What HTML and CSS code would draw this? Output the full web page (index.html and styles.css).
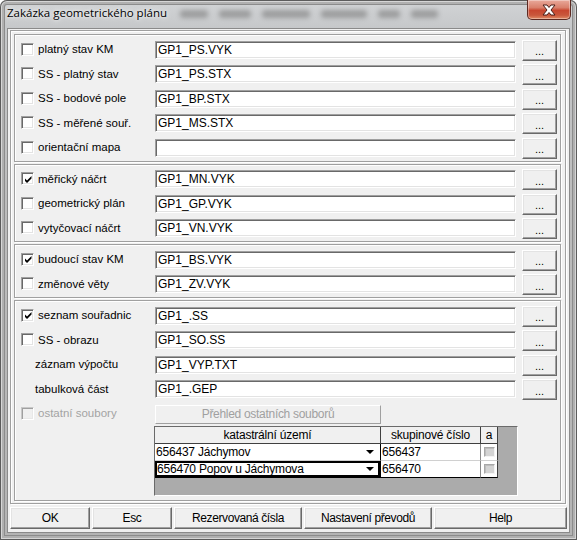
FILE: index.html
```html
<!DOCTYPE html>
<html lang="cs">
<head>
<meta charset="utf-8">
<title>Zakázka geometrického plánu</title>
<link rel="stylesheet" href="styles.css">
</head>
<body>
<div class="window">
  <div class="titlebar">
    <span class="title">Zakázka geometrického plánu</span>
    <div class="glass">
      <i class="sm w28"></i><i class="sm w32"></i><i class="sm w48"></i><i class="sm w46"></i><i class="sm w22"></i><i class="sm w27"></i>
    </div>
    <div class="close">
      <svg width="16" height="12" viewBox="0 0 16 12"><path d="M2 1 L6 1 L8 3.5 L10 1 L14 1 L10 6 L14 11 L10 11 L8 8.5 L6 11 L2 11 L6 6 Z" fill="#fff" stroke="#4a1f18" stroke-width="1" stroke-linejoin="round"/></svg>
    </div>
  </div>
  <div class="client">
    <div class="frame">
      <div class="group">
        <div class="row"><div class="lbl"><span class="cb"></span>platný stav KM</div><div class="edit">GP1_PS.VYK</div><div class="dots">...</div></div>
        <div class="row"><div class="lbl"><span class="cb"></span>SS - platný stav</div><div class="edit">GP1_PS.STX</div><div class="dots">...</div></div>
        <div class="row"><div class="lbl"><span class="cb"></span>SS - bodové pole</div><div class="edit">GP1_BP.STX</div><div class="dots">...</div></div>
        <div class="row"><div class="lbl"><span class="cb"></span>SS - měřené souř.</div><div class="edit">GP1_MS.STX</div><div class="dots">...</div></div>
        <div class="row"><div class="lbl"><span class="cb"></span>orientační mapa</div><div class="edit"></div><div class="dots">...</div></div>
      </div>
      <div class="group">
        <div class="row"><div class="lbl"><span class="cb checked"><svg width="9" height="9" viewBox="0 0 9 9"><path d="M1 3.5 L3 5.5 L7.5 1 L7.5 3.5 L3 8 L1 6 Z" fill="#000"/></svg></span>měřický náčrt</div><div class="edit">GP1_MN.VYK</div><div class="dots">...</div></div>
        <div class="row"><div class="lbl"><span class="cb"></span>geometrický plán</div><div class="edit">GP1_GP.VYK</div><div class="dots">...</div></div>
        <div class="row"><div class="lbl"><span class="cb"></span>vytyčovací náčrt</div><div class="edit">GP1_VN.VYK</div><div class="dots">...</div></div>
      </div>
      <div class="group">
        <div class="row"><div class="lbl"><span class="cb checked"><svg width="9" height="9" viewBox="0 0 9 9"><path d="M1 3.5 L3 5.5 L7.5 1 L7.5 3.5 L3 8 L1 6 Z" fill="#000"/></svg></span>budoucí stav KM</div><div class="edit">GP1_BS.VYK</div><div class="dots">...</div></div>
        <div class="row"><div class="lbl"><span class="cb"></span>změnové věty</div><div class="edit">GP1_ZV.VYK</div><div class="dots">...</div></div>
      </div>
      <div class="group last">
        <div class="row"><div class="lbl"><span class="cb checked"><svg width="9" height="9" viewBox="0 0 9 9"><path d="M1 3.5 L3 5.5 L7.5 1 L7.5 3.5 L3 8 L1 6 Z" fill="#000"/></svg></span>seznam souřadnic</div><div class="edit">GP1_.SS</div><div class="dots">...</div></div>
        <div class="row"><div class="lbl"><span class="cb"></span>SS - obrazu</div><div class="edit">GP1_SO.SS</div><div class="dots">...</div></div>
        <div class="row"><div class="lbl plain">záznam výpočtu</div><div class="edit">GP1_VYP.TXT</div><div class="dots">...</div></div>
        <div class="row"><div class="lbl plain">tabulková část</div><div class="edit">GP1_.GEP</div><div class="dots">...</div></div>
        <div class="row"><div class="lbl disabled"><span class="cb off"></span>ostatní soubory</div><div class="pbtn">Přehled ostatních souborů</div></div>
        <div class="table">
          <div class="grid">
            <div class="th">katastrální území</div>
            <div class="th">skupinové číslo</div>
            <div class="th">a</div>
            <div class="td combo">656437 Jáchymov<span class="arrow"></span></div>
            <div class="td num">656437</div>
            <div class="td chk"><span class="mini"></span></div>
            <div class="td combo focus lastrow">656470 Popov u Jáchymova<span class="arrow"></span></div>
            <div class="td num lastrow">656470</div>
            <div class="td chk lastrow"><span class="mini"></span></div>
          </div>
        </div>
      </div>
    </div>
    <div class="buttons">
      <div class="btn b-ok">OK</div>
      <div class="btn b-esc">Esc</div>
      <div class="btn b-rez">Rezervovaná čísla</div>
      <div class="btn b-nas">Nastavení převodů</div>
      <div class="btn b-help">Help</div>
    </div>
  </div>
</div>
</body>
</html>
```
FILE: styles.css
```css
* { box-sizing: border-box; }
html, body { margin: 0; padding: 0; }
body {
  width: 577px;
  height: 540px;
  overflow: hidden;
  background: #ffffff;
  font-family: "Liberation Sans", Arial, sans-serif;
  font-size: 11px;
  color: #000;
}

.window {
  width: 577px;
  height: 540px;
  display: flex;
  flex-direction: column;
  padding: 0 8px 8px;
  border-radius: 7px 7px 0 0;
  background: linear-gradient(180deg, #d2d4d6 0, #c6c8ca 28px, #bdbdbd 200px, #b4b4b4 100%);
  box-shadow: inset 0 0 0 1px #5c5c5c, inset 0 0 0 2px #d6d6d6, inset 0 0 0 4px #b0b0b0, inset 0 0 0 5px #8c8c8c;
}

/* title bar */
.titlebar {
  height: 29px;
  flex: none;
  display: flex;
  align-items: flex-start;
}
.title {
  margin: 5px 0 0 -1px;
  font-family: "Open Sans", "Noto Sans", sans-serif;
  font-size: 11.5px;
  line-height: 16px;
  color: #000;
  text-shadow: 0 0 6px #f4f4f4, 0 0 3px #f4f4f4;
  white-space: nowrap;
}
.glass {
  display: flex;
  gap: 11px;
  margin: 10px 0 0 13px;
  filter: blur(2.5px);
  opacity: .5;
}
.sm { display: block; height: 8px; background: #6d6d6d; border-radius: 3px; }
.w28 { width: 28px; }
.w32 { width: 32px; }
.w48 { width: 48px; }
.w46 { width: 46px; }
.w22 { width: 22px; }
.w27 { width: 27px; }
.close {
  margin-left: auto;
  margin-right: -2px;
  width: 44px;
  height: 20px;
  display: flex;
  align-items: center;
  justify-content: center;
  border: 1px solid #5c2a22;
  border-top: none;
  border-radius: 0 0 5px 5px;
  background: linear-gradient(180deg, #e9a99b 0, #d9806c 40%, #c8462f 55%, #c9573c 80%, #e08c66 100%);
  box-shadow: inset 0 0 0 1px rgba(255,255,255,.35);
}

/* client area */
.client {
  flex: 1;
  background: #f0f0f0;
  box-shadow: 0 0 0 1px #8a8a8a;
  display: flex;
  flex-direction: column;
}
.frame {
  margin: 1px 3px 0 2px;
  padding: 3px 4px 2px 3px;
  border: 1px solid #a0a0a0;
  box-shadow: inset 1px 1px 0 #fff, 1px 1px 0 #fff;
  display: flex;
  flex-direction: column;
  gap: 2px;
}
.group {
  border: 1px solid #a0a0a0;
  box-shadow: inset 1px 1px 0 #fff, 1px 1px 0 #fff;
  padding: 2px 0 1px 0;
}
.group.last { padding-bottom: 4px; }

.row {
  height: 24.5px;
  display: grid;
  grid-template-columns: 134px 361px 35px;
  column-gap: 6px;
  align-items: center;
}
.lbl {
  display: flex;
  align-items: center;
  gap: 4px;
  padding-left: 6px;
  white-space: nowrap;
  font-size: 11.5px;
}
.lbl.plain { padding-left: 20px; }
.lbl.disabled { color: #a3a3a3; }

.cb {
  width: 13px;
  height: 13px;
  flex: none;
  background: #fff;
  border: 1px solid;
  border-color: #a0a0a0 #fff #fff #a0a0a0;
  box-shadow: inset 1px 1px 0 #696969, inset -1px -1px 0 #e3e3e3;
  display: flex;
  align-items: center;
  justify-content: center;
  padding: 1px 0 0 1px;
}
.cb.off {
  background: #f0f0f0;
  border-color: #c8c8c8 #fff #fff #c8c8c8;
  box-shadow: inset 1px 1px 0 #a0a0a0, inset -1px -1px 0 #e8e8e8;
}

.edit {
  height: 18px;
  margin-top: 1px;
  background: #fff;
  border: 1px solid;
  border-color: #a0a0a0 #fff #fff #a0a0a0;
  box-shadow: inset 1px 1px 0 #696969, inset -1px -1px 0 #e3e3e3;
  font-size: 12px;
  line-height: 16px;
  padding: 0 0 0 2px;
  white-space: nowrap;
}
.dots, .btn, .pbtn {
  background: #f0f0f0;
  border: 1px solid;
  border-color: #fff #696969 #696969 #fff;
  box-shadow: inset -1px -1px 0 #a0a0a0, inset 1px 1px 0 #e3e3e3;
  display: flex;
  align-items: center;
  justify-content: center;
  white-space: nowrap;
}
.dots {
  height: 21px;
  margin-top: 2px;
  font-size: 11px;
  padding-top: 2px;
}
.pbtn {
  justify-self: start;
  width: 226px;
  height: 19px;
  margin-top: 2px;
  border-color: #fff #a0a0a0 #a0a0a0 #fff;
  box-shadow: none;
  color: #a0a0a0;
  font-size: 12px;
  letter-spacing: -.3px;
}

/* table */
.table {
  margin-left: 139px;
  width: 364px;
  height: 70px;
  background: #ababab;
  border: 1px solid;
  border-color: #6a6a6a #ffffff #ffffff #6a6a6a;
}
.grid {
  display: grid;
  grid-template-columns: 226px 100px 17px;
  grid-template-rows: 17px 17px 17px;
  width: 343px;
  font-size: 12px;
  letter-spacing: -.2px;
}
.th {
  background: #f0f0f0;
  border-right: 1px solid #404040;
  border-bottom: 1px solid #404040;
  text-align: center;
  line-height: 16px;
  white-space: nowrap;
}
.td {
  background: #fff;
  border-right: 1px solid #8a8a8a;
  border-bottom: 1px solid #d0d0d0;
  line-height: 16px;
  white-space: nowrap;
  display: flex;
  align-items: center;
  padding-left: 1px;
}
.td.combo { border-right-color: #000; }
.td.lastrow { border-bottom-color: #000; }
.td.focus { box-shadow: inset 0 0 0 2px #000; padding-left: 2px; }
.td.chk { justify-content: center; padding: 0; border-right-color: #404040; }
.arrow {
  margin-left: auto;
  margin-right: 6px;
  width: 0;
  height: 0;
  border-left: 4px solid transparent;
  border-right: 4px solid transparent;
  border-top: 4px solid #000;
}
.mini {
  width: 11px;
  height: 10px;
  background: #d4d4d4;
  border: 1px solid;
  border-color: #a8a8a8 #f4f4f4 #f4f4f4 #a8a8a8;
  box-shadow: inset 1px 1px 0 #bdbdbd;
}

/* bottom buttons */
.buttons {
  display: flex;
  gap: 2px;
  margin: 3px 0 0 2px;
}
.btn {
  height: 22px;
  font-size: 12px;
  letter-spacing: -.4px;
}
.b-ok { width: 80px; }
.b-esc { width: 80px; }
.b-rez { width: 128px; }
.b-nas { width: 128px; }
.b-help { width: 133px; }
```
